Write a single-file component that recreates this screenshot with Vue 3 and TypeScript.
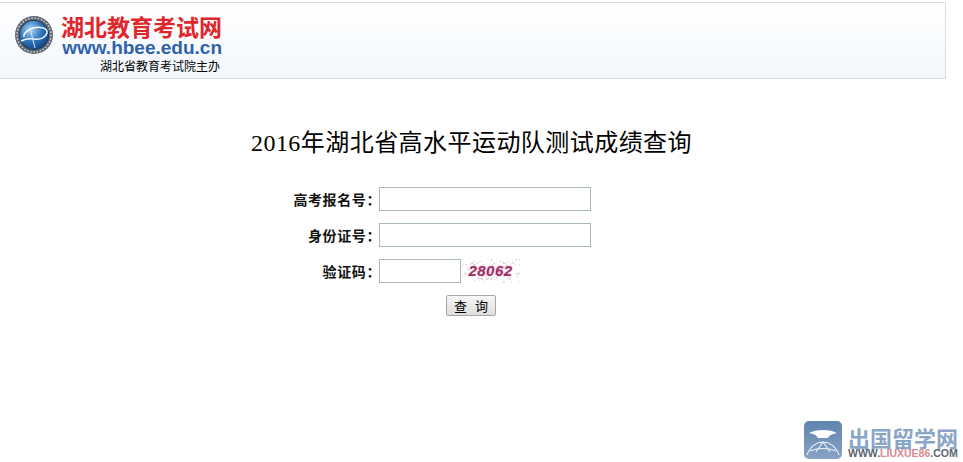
<script setup lang="ts">
const rows: { label: string; short?: boolean }[] = [
  { label: '高考报名号：' },
  { label: '身份证号：' },
  { label: '验证码：', short: true },
]

// Scattered noise of the captcha picture, from a small fixed generator.
let seed = 28062
const next = (): number => {
  seed = (seed * 16807) % 2147483647
  return seed / 2147483647
}
const noise = Array.from({ length: 120 }, () => ({
  x: +(next() * 60).toFixed(1),
  y: +(next() * 24).toFixed(1),
  fill: next() > 0.5 ? '#b9c2b8' : '#d9a9c8',
}))
</script>

<template>
  <div class="page">
    <header class="banner">
      <svg class="emblem" width="40" height="40" viewBox="0 0 40 40">
        <defs>
          <radialGradient id="globe" cx="38%" cy="32%" r="70%">
            <stop offset="0" stop-color="#b4d8f5" />
            <stop offset="0.55" stop-color="#2f78bf" />
            <stop offset="1" stop-color="#114a8a" />
          </radialGradient>
        </defs>
        <circle cx="20" cy="20" r="19" fill="#5d6773" />
        <circle cx="20" cy="20" r="17" fill="none" stroke="#c9d0d8" stroke-width="1.4" stroke-dasharray="1.6 1.6" />
        <circle cx="20" cy="20" r="15" fill="#27323f" />
        <circle cx="20" cy="20" r="14.2" fill="url(#globe)" />
        <path d="M7 26C11 24 15 23 20 24C27 25 32 22 33 18C34 13 26 11 19 13C13 15 9 19 10 22" fill="none" stroke="#f2f8fd" stroke-width="1.5" />
        <path d="M16 13L21 33" fill="none" stroke="#d7e9f8" stroke-width="1" />
      </svg>
      <div class="brand">
        <div class="brand-cn">湖北教育考试网</div>
        <div class="brand-url">www.hbee.edu.cn</div>
        <div class="brand-sub">湖北省教育考试院主办</div>
      </div>
    </header>

    <main class="content">
      <h1 class="title">2016年湖北省高水平运动队测试成绩查询</h1>
      <form class="form" @submit.prevent>
        <div v-for="row in rows" :key="row.label" class="row">
          <label class="label">{{ row.label }}</label>
          <input class="field" :class="{ short: row.short }" type="text" />
          <span v-if="row.short" class="captcha">
            <svg class="captcha-noise" width="60" height="24" viewBox="0 0 60 24">
              <rect v-for="(d, i) in noise" :key="i" :x="d.x" :y="d.y" width="1" height="1" :fill="d.fill" />
            </svg>
            <span class="captcha-code">28062</span>
          </span>
        </div>
        <div class="actions">
          <button class="submit" type="submit">查 询</button>
        </div>
      </form>
    </main>

    <aside class="mark">
      <svg width="38" height="38" viewBox="0 0 38 38">
        <defs>
          <linearGradient id="tile" x1="0" y1="0" x2="0" y2="1">
            <stop offset="0" stop-color="#5f85ad" />
            <stop offset="1" stop-color="#88a2c4" />
          </linearGradient>
        </defs>
        <rect width="38" height="38" rx="5" fill="url(#tile)" />
        <path d="M5 12C12 8 26 8 33 12C27 13 25 15 24 17L14 17C13 15 11 13 5 12Z" fill="#fff" />
        <path d="M3 34C6 25 13 21 19 21C25 21 32 25 35 34M12 31L19 21L26 31M6 30C14 27 24 27 32 30" fill="none" stroke="#eef3f8" stroke-width="1.1" />
      </svg>
      <div class="mark-text">
        <div class="mark-cn">出国留学网</div>
        <div class="mark-url">WWW.<span>LIUXUE86</span>.COM</div>
      </div>
    </aside>
  </div>
</template>

<style>
html, body { margin: 0; background: #fff; overflow: hidden; }
</style>

<style scoped>
.page {
  position: relative;
  width: 963px;
  height: 462px;
  padding-top: 2px;
  box-sizing: border-box;
  font-family: "Liberation Serif", "Noto Sans CJK SC", serif;
  color: #000;
}
.banner {
  width: 946px;
  height: 77px;
  box-sizing: border-box;
  border: 1px solid #d3dee5;
  border-left: 0;
  background: linear-gradient(#fff, #f2f7fc);
  display: flex;
  padding: 12px 0 0 14px;
}
.emblem { flex: none; margin-right: 5px; }
.brand {
  width: 163px;
  display: flex;
  flex-direction: column;
  align-items: flex-end;
  margin-top: -2px;
}
.brand-cn {
  font: 700 23px/26px "Noto Sans CJK SC", sans-serif;
  color: #e0252b;
  white-space: nowrap;
}
.brand-url {
  font: 700 19px/17px "Liberation Sans", sans-serif;
  color: #2f62ad;
  white-space: nowrap;
}
.brand-sub {
  font: 400 12px/15px "Noto Sans CJK SC", sans-serif;
  margin: 2px 2px 0 0;
  white-space: nowrap;
}
.content { padding-top: 48px; }
.title {
  margin: 0 0 28px 251px;
  font-size: 24px;
  line-height: 32px;
  font-weight: 400;
  letter-spacing: 0.45px;
  white-space: nowrap;
}
.form { display: flex; flex-direction: column; gap: 12px; }
.row { display: flex; align-items: center; height: 24px; }
.label {
  width: 381px;
  margin-right: -2px;
  text-align: right;
  font: 700 14px/24px "Noto Sans CJK SC", sans-serif;
  letter-spacing: 0.6px;
  color: #111;
}
.field {
  position: relative;
  width: 212px;
  height: 24px;
  box-sizing: border-box;
  padding: 0 2px;
  border: 1px solid #a9b7bf;
  background: #fff;
  outline: none;
}
.field.short { width: 82px; }
.captcha {
  position: relative;
  width: 60px;
  height: 24px;
  text-align: center;
}
.captcha-noise { position: absolute; left: 0; top: 0; }
.captcha-code {
  position: relative;
  display: block;
  margin-left: -1px;
  font: italic 700 15px/24px "Liberation Sans", sans-serif;
  letter-spacing: 0.5px;
  color: #9c2f63;
  text-shadow: 0 0 2px #eeb4d4;
}
.actions { padding-left: 446px; }
.submit {
  display: block;
  width: 50px;
  height: 21px;
  padding: 0;
  border: 1px solid #a6a6a6;
  border-radius: 2px;
  background: linear-gradient(#f7f7f7, #dedede);
  font: 400 13px/19px "Noto Sans CJK SC", sans-serif;
  color: #000;
  word-spacing: 5px;
}
.mark {
  position: absolute;
  left: 804px;
  top: 421px;
  display: flex;
  gap: 6px;
  width: 159px;
}
.mark svg { flex: none; }
.mark-text { padding-top: 4px; }
.mark-cn {
  font: 700 22px/24px "Noto Sans CJK SC", sans-serif;
  color: #8aa6c6;
  white-space: nowrap;
}
.mark-url {
  font: 700 10.5px/9px "Liberation Sans", sans-serif;
  color: #5a6570;
  white-space: nowrap;
}
.mark-url span { color: #d88a8f; }
</style>
